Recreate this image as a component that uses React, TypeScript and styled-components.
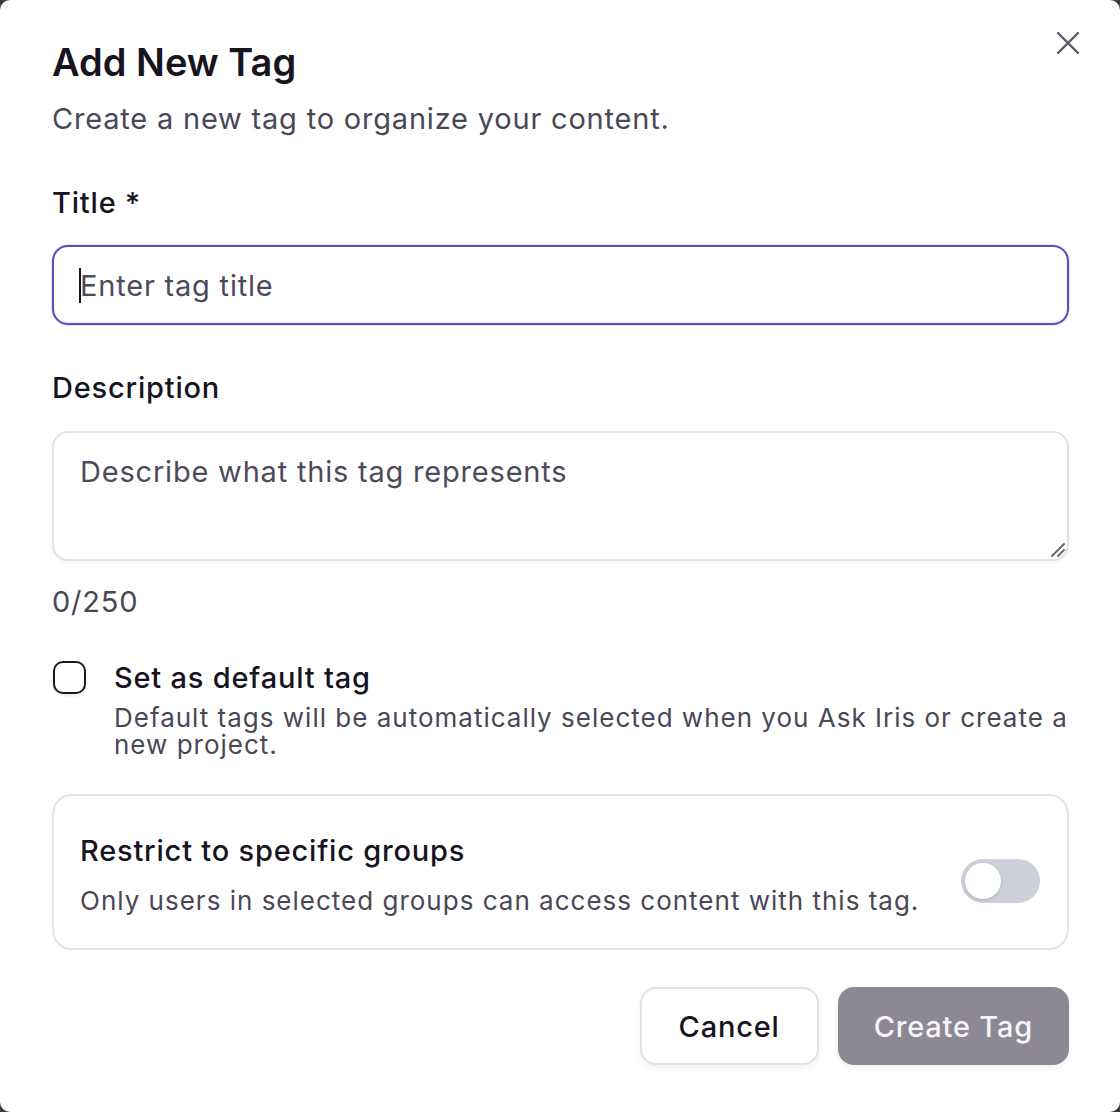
import React from "react";
import styled, { createGlobalStyle } from "styled-components";

const Global = createGlobalStyle`
  html, body { margin: 0; padding: 0; background: #3a3940; }
  body { font-family: Inter, "Noto Sans", sans-serif; -webkit-font-smoothing: antialiased; }
  * { box-sizing: border-box; }
`;

const Dialog = styled.div`
  position: relative;
  width: 1120px;
  height: 1112px;
  background: #ffffff;
  border-radius: 10px;
  padding: 38px 51px 48px 52px;
  display: flex;
  flex-direction: column;
  color: #17141f;
`;

const CloseButton = styled.button`
  position: absolute;
  top: 27px;
  right: 36px;
  width: 32px;
  height: 32px;
  border: 0;
  background: transparent;
  padding: 0;
  display: flex;
  align-items: center;
  justify-content: center;
  color: #5b5966;
  cursor: pointer;
`;

const Title = styled.h2`
  margin: 0;
  font-size: 38px;
  line-height: 48px;
  font-weight: 600;
  letter-spacing: 0;
  color: #17141f;
`;

const Subtitle = styled.p`
  margin: 13px 0 0;
  font-size: 29px;
  letter-spacing: 0.8px;
  line-height: 40px;
  color: #4a4757;
`;

const Label = styled.label<{ $top: number }>`
  display: block;
  margin-top: ${(p) => p.$top}px;
  font-size: 29px;
  letter-spacing: 0.8px;
  line-height: 40px;
  font-weight: 500;
  color: #17141f;
`;

const FieldWrap = styled.div<{ $top: number }>`
  position: relative;
  margin-top: ${(p) => p.$top}px;
`;

const TextInput = styled.input`
  display: block;
  width: 100%;
  height: 80px;
  border: 2px solid #5b4fc0;
  border-radius: 16px;
  padding: 0 26px;
  font-family: inherit;
  font-size: 29px;
  letter-spacing: 0.8px;
  color: #17141f;
  outline: none;
  box-shadow: 0 0 0 1px rgba(91, 79, 192, 0.15), inset 0 -2px 2px rgba(0, 0, 0, 0.06);
  &::placeholder { color: #4d4a5c; }
`;

const Caret = styled.span`
  position: absolute;
  left: 27px;
  top: 23px;
  width: 2px;
  height: 35px;
  background: #17141f;
`;

const TextArea = styled.textarea`
  display: block;
  width: 100%;
  height: 130px;
  border: 2px solid #e3e2ea;
  border-radius: 16px;
  padding: 19px 26px;
  font-family: inherit;
  font-size: 29px;
  letter-spacing: 0.8px;
  line-height: 40px;
  color: #17141f;
  resize: none;
  outline: none;
  box-shadow: 0 2px 3px rgba(0, 0, 0, 0.04);
  &::placeholder { color: #4d4a5c; }
`;

const Grip = styled.svg`
  position: absolute;
  right: 3px;
  bottom: 3px;
  pointer-events: none;
`;

const Counter = styled.div`
  margin-top: 21px;
  font-size: 29px;
  letter-spacing: 0.8px;
  line-height: 40px;
  color: #4a4757;
`;

const CheckRow = styled.div`
  margin-top: 39px;
  display: flex;
  align-items: flex-start;
  gap: 28px;
`;

const CheckBox = styled.button`
  flex: none;
  margin: 0 0 0 1px;
  width: 33px;
  height: 33px;
  border: 2.5px solid #1b1826;
  border-radius: 10px;
  background: #fff;
  padding: 0;
  box-shadow: 0 2px 3px rgba(0, 0, 0, 0.08);
`;

const CheckText = styled.div`
  display: flex;
  flex-direction: column;
  margin-top: -1px;
`;

const CheckTitle = styled.div`
  font-size: 29px;
  letter-spacing: 0.8px;
  line-height: 36px;
  font-weight: 500;
  color: #17141f;
`;

const Help = styled.div`
  margin-top: 8px;
  font-size: 26px;
  letter-spacing: 1px;
  line-height: 27px;
  color: #4a4757;
`;

const RestrictBox = styled.div`
  margin-top: 36px;
  border: 2px solid #e4e3ea;
  border-radius: 20px;
  padding: 35px 27px 27px 26px;
  display: flex;
  align-items: center;
  justify-content: space-between;
  gap: 24px;
`;

const RestrictText = styled.div`
  display: flex;
  flex-direction: column;
  gap: 10px;
`;

const RestrictTitle = styled.div`
  font-size: 29px;
  letter-spacing: 0.8px;
  line-height: 40px;
  font-weight: 500;
  color: #17141f;
`;

const RestrictSub = styled.div`
  font-size: 26px;
  letter-spacing: 1px;
  line-height: 40px;
  color: #4a4757;
`;

const Toggle = styled.button`
  flex: none;
  width: 79px;
  height: 44px;
  margin-top: 10px;
  border: 0;
  border-radius: 22px;
  background: #cdd0d8;
  padding: 4px;
  display: flex;
  align-items: center;
`;

const Knob = styled.span`
  width: 36px;
  height: 36px;
  border-radius: 50%;
  background: #fff;
  box-shadow: 0 1px 3px rgba(0, 0, 0, 0.15);
`;

const Footer = styled.div`
  margin-top: 37px;
  display: flex;
  justify-content: flex-end;
  gap: 19px;
`;

const Button = styled.button<{ $primary?: boolean }>`
  flex: none;
  height: 78px;
  padding: 0 ${(p) => (p.$primary ? 36 : 37)}px;
  border-radius: 16px;
  font-family: inherit;
  font-size: 29px;
  letter-spacing: 0.8px;
  font-weight: 500;
  cursor: pointer;
  border: ${(p) => (p.$primary ? "0" : "2.5px solid #e2e0ec")};
  background: ${(p) => (p.$primary ? "#8c8894" : "#fff")};
  color: ${(p) => (p.$primary ? "#f6f5f8" : "#17141f")};
  box-shadow: 0 3px 6px rgba(0, 0, 0, 0.06);
`;

export default function App() {
  return (
    <>
      <Global />
      <Dialog role="dialog" aria-labelledby="dlg-title">
        <CloseButton aria-label="Close">
          <svg width="24" height="24" viewBox="0 0 24 24" fill="none" stroke="currentColor" strokeWidth="2.4" strokeLinecap="round">
            <path d="M2 2 L22 22 M22 2 L2 22" />
          </svg>
        </CloseButton>
        <Title id="dlg-title">Add New Tag</Title>
        <Subtitle>Create a new tag to organize your content.</Subtitle>

        <Label $top={44} htmlFor="tag-title">Title *</Label>
        <FieldWrap $top={22}>
          <TextInput id="tag-title" placeholder="Enter tag title" />
          <Caret />
        </FieldWrap>

        <Label $top={43} htmlFor="tag-desc">Description</Label>
        <FieldWrap $top={23}>
          <TextArea id="tag-desc" placeholder="Describe what this tag represents" />
          <Grip width="16" height="16" viewBox="0 0 16 16">
            <path d="M2 14 L14 2 M8 14 L14 8" stroke="#6b6b6b" strokeWidth="2" strokeLinecap="round" />
          </Grip>
        </FieldWrap>
        <Counter>0/250</Counter>

        <CheckRow>
          <CheckBox role="checkbox" aria-checked="false" />
          <CheckText>
            <CheckTitle>Set as default tag</CheckTitle>
            <Help>
              Default tags will be automatically selected when you Ask Iris or create a new project.
            </Help>
          </CheckText>
        </CheckRow>

        <RestrictBox>
          <RestrictText>
            <RestrictTitle>Restrict to specific groups</RestrictTitle>
            <RestrictSub>Only users in selected groups can access content with this tag.</RestrictSub>
          </RestrictText>
          <Toggle role="switch" aria-checked="false">
            <Knob />
          </Toggle>
        </RestrictBox>

        <Footer>
          <Button>Cancel</Button>
          <Button $primary>Create Tag</Button>
        </Footer>
      </Dialog>
    </>
  );
}
